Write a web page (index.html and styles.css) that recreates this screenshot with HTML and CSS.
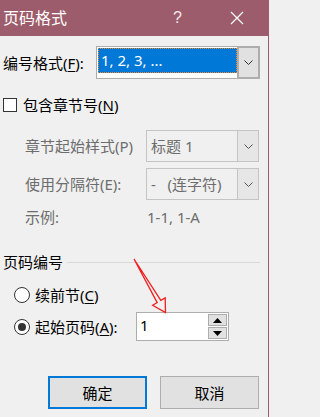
FILE: index.html
```html
<!DOCTYPE html>
<html lang="zh-CN">
<head>
<meta charset="utf-8">
<title>页码格式</title>
<link rel="stylesheet" href="styles.css">
</head>
<body>
<div class="dialog">
  <div class="titlebar">
    <span class="title">页码格式</span>
    <span class="help">?</span>
    <span class="close"><svg width="14" height="14" viewBox="0 0 14 14"><path d="M1 1L13 13M13 1L1 13" stroke="#fff" stroke-width="1.2" fill="none"/></svg></span>
  </div>
  <div class="content">
    <div class="row row-format">
      <span class="lbl-main">编号格式(<u>F</u>):</span>
      <div class="combo combo-main">
        <div class="combo-field"><span class="sel">1, 2, 3, ...</span></div>
        <div class="combo-btn"><svg width="9" height="5" viewBox="0 0 9 5"><path d="M0.5 0.5L4.5 4.5L8.5 0.5" stroke="#333" fill="none"/></svg></div>
      </div>
    </div>
    <div class="row row-check">
      <span class="checkbox"></span>
      <span class="check-lbl">包含章节号(<u>N</u>)</span>
    </div>
    <div class="row row-sub row-combo1">
      <span class="lbl-sub">章节起始样式(P)</span>
      <div class="combo combo-dis">
        <div class="combo-field dis-field">标题 1</div>
        <div class="combo-btn dis-btn"><svg width="9" height="5" viewBox="0 0 9 5"><path d="M0.5 0.5L4.5 4.5L8.5 0.5" stroke="#555" fill="none"/></svg></div>
      </div>
    </div>
    <div class="row row-sub row-combo2">
      <span class="lbl-sub">使用分隔符(E):</span>
      <div class="combo combo-dis">
        <div class="combo-field dis-field">-&nbsp;&nbsp;&nbsp;(连字符)</div>
        <div class="combo-btn dis-btn"><svg width="9" height="5" viewBox="0 0 9 5"><path d="M0.5 0.5L4.5 4.5L8.5 0.5" stroke="#555" fill="none"/></svg></div>
      </div>
    </div>
    <div class="row row-sub row-example">
      <span class="lbl-sub">示例:</span>
      <span class="example-val">1-1, 1-A</span>
    </div>
    <div class="row row-group">
      <span class="group-title">页码编号</span>
      <span class="group-line"></span>
    </div>
    <div class="row row-radio row-radio1">
      <span class="radio"></span>
      <span class="radio-lbl">续前节(<u>C</u>)</span>
    </div>
    <div class="row row-radio row-radio2">
      <span class="radio checked"></span>
      <span class="radio-lbl radio-lbl2">起始页码(<u>A</u>):</span>
      <div class="spin">
        <div class="spin-field">1</div>
        <div class="spin-btns">
          <div class="spin-btn"><svg width="9" height="5" viewBox="0 0 9 5"><path d="M0 5L4.5 0L9 5Z" fill="#000"/></svg></div>
          <div class="spin-btn"><svg width="9" height="5" viewBox="0 0 9 5"><path d="M0 0L4.5 5L9 0Z" fill="#000"/></svg></div>
        </div>
      </div>
    </div>
    <div class="row row-buttons">
      <button class="btn btn-default">确定</button>
      <button class="btn">取消</button>
    </div>
  </div>
  <svg class="annot-arrow" width="269" height="417" viewBox="0 0 269 417">
    <path d="M134 259 L160.8 300.4 L165.2 297.9 L165.5 312.5 L152.7 305.2 L157.2 302.6 Z" stroke="#f02020" stroke-width="1.3" fill="none" stroke-linejoin="miter"/>
  </svg>
</div>
</body>
</html>
```

FILE: styles.css
```css
* { box-sizing: border-box; }
html, body {
  margin: 0;
  padding: 0;
  background: #f0f0f0;
}
body {
  font-family: "Noto Sans", "Noto Sans CJK SC", sans-serif;
  font-size: 15px;
  line-height: 20px;
  color: #000;
}
.dialog {
  position: relative;
  width: 269px;
  height: 417px;
  background: #f0f0f0;
  border-right: 1px solid #9d5c6b;
  overflow: hidden;
}
.titlebar {
  height: 36px;
  background: #9d5c6b;
  display: flex;
  align-items: center;
  color: #fff;
}
.title {
  font-size: 16px;
  padding-left: 3px;
  flex: 1;
  letter-spacing: 0;
}
.help {
  font-family: "Liberation Sans", sans-serif;
  font-size: 16px;
  width: 12px;
  margin-right: 45px;
  color: #f4e8eb;
}
.close {
  display: flex;
  width: 14px;
  margin-right: 24px;
}
.content {
  display: flex;
  flex-direction: column;
}
.row {
  display: flex;
  align-items: center;
}
u { text-decoration: underline; text-underline-offset: 2px; }

/* row 1 */
.row-format {
  margin-top: 10px;
  height: 33px;
  padding-left: 3px;
}
.lbl-main { width: 93px; }
.combo {
  display: flex;
  height: 33px;
  border: 1px solid #adadad;
  background: #fff;
}
.combo-main { width: 164px; }
.combo-field {
  flex: 1;
  padding: 1px 0 0 1px;
}
.sel {
  display: block;
  height: 25px;
  background: #0078d7;
  color: #fff;
  padding-left: 3px;
  line-height: 24px;
  outline: 1px dotted #f08a24;
  outline-offset: -1px;
}
.combo-btn {
  width: 21px;
  background: #e1e1e1;
  display: flex;
  align-items: center;
  justify-content: center;
  border-left: 1px solid #adadad;
}
.combo-main .combo-btn {
  border: 2px solid #adadad;
  margin: -1px -1px -1px 0;
  width: 23px;
}

/* checkbox */
.row-check {
  margin-top: 17px;
  height: 18px;
  padding-left: 3px;
}
.checkbox {
  width: 14px;
  height: 14px;
  border: 1px solid #333;
  background: #fff;
  margin-right: 6px;
}

/* sub rows */
.row-sub {
  padding-left: 25px;
  color: #6d6d6d;
}
.row-combo1 { margin-top: 16px; height: 32px; }
.row-combo2 { margin-top: 6px; height: 32px; }
.lbl-sub { width: 121px; }
.combo-dis {
  width: 113px;
  height: 32px;
  border-color: #c4c4c4;
  background: #f0f0f0;
}
.dis-field {
  padding: 0 0 0 4px;
  display: flex;
  align-items: center;
  color: #6d6d6d;
}
.dis-btn {
  background: #e6e6e6;
  border-left: 1px solid #c4c4c4;
}
.row-example { margin-top: 7px; height: 20px; }
.example-val { padding-left: 1px; }

/* group */
.row-group {
  margin-top: 25px;
  height: 20px;
  padding-left: 3px;
}
.group-title { width: 64px; }
.group-line {
  width: 193px;
  height: 1px;
  background: #d9d9d9;
}

/* radios */
.row-radio { padding-left: 14px; }
.row-radio1 { margin-top: 13px; height: 20px; }
.row-radio2 { margin-top: 7px; height: 29px; }
.radio {
  width: 16px;
  height: 16px;
  border: 1px solid #333;
  border-radius: 50%;
  background: #fff;
  margin-right: 5px;
  display: flex;
  align-items: center;
  justify-content: center;
}
.radio.checked::after {
  content: "";
  width: 8px;
  height: 8px;
  border-radius: 50%;
  background: #333;
}
.radio-lbl2 { width: 101px; }
.spin {
  display: flex;
  width: 93px;
  height: 29px;
  border: 1px solid #adadad;
  background: #fff;
}
.spin-field {
  flex: 1;
  padding-left: 3px;
  line-height: 24px;
}
.spin-btns {
  display: flex;
  flex-direction: column;
  justify-content: center;
  gap: 1px;
  padding: 1px 1px 1px 0;
}
.spin-btn {
  width: 19px;
  height: 12px;
  background: #e1e1e1;
  border: 1px solid #adadad;
  display: flex;
  align-items: center;
  justify-content: center;
}

/* buttons */
.row-buttons {
  margin-top: 35px;
  padding-left: 48px;
  gap: 13px;
}
.btn {
  width: 99px;
  height: 33px;
  background: #e1e1e1;
  border: 1px solid #adadad;
  font-family: "Noto Sans", "Noto Sans CJK SC", sans-serif;
  font-size: 15px;
  color: #000;
  padding: 0;
}
.btn-default {
  border: 2px solid #0078d7;
}

.annot-arrow {
  position: absolute;
  left: 0;
  top: 0;
  pointer-events: none;
}
```
